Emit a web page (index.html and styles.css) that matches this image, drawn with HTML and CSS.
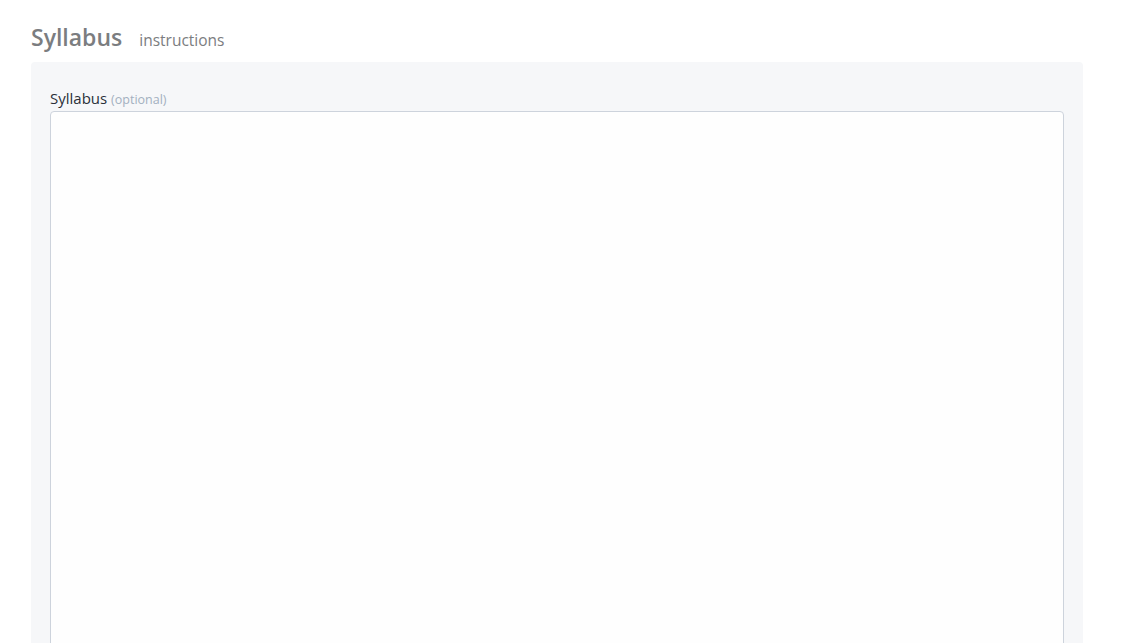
FILE: index.html
```html
<!DOCTYPE html>
<html>
	<head>
		<meta charset="UTF-8">
		<title>Syllabus</title>
		<link rel="stylesheet" href="styles.css">
	</head>
	<body>
		<div class="page">
			<div class="title">
				<h1>Syllabus</h1>
				<span class="sub">instructions</span>
			</div>
			<div class="panel">
				<label class="label" for="syllabus">Syllabus <span class="opt">(optional)</span></label>
				<textarea id="syllabus" class="area"></textarea>
			</div>
		</div>
	</body>
</html>
```

FILE: styles.css
```css
* {
	padding: 0;
	margin: 0;
	box-sizing: border-box;
}
body {
	font-family: "Open Sans", "Liberation Sans", sans-serif;
	background: #fff;
	overflow: hidden;
}
.page {
	width: 1052px;
	margin-left: 31px;
	padding-top: 20px;
}
.title {
	display: flex;
	align-items: baseline;
	gap: 17px;
	height: 42px;
}
.title h1 {
	font-size: 23px;
	font-weight: 600;
	color: #7b7d80;
	line-height: 34px;
}
.title .sub {
	font-size: 15.5px;
	color: #7b7d80;
}
.panel {
	background: #f6f7f9;
	border-radius: 4px;
	padding: 26px 19px 0;
	height: 620px;
}
.label {
	display: block;
	font-size: 15px;
	line-height: 21px;
	color: #2a303a;
	margin-bottom: 1px;
}
.label .opt {
	font-size: 12.5px;
	color: #a3b0c0;
}
.area {
	display: block;
	width: 100%;
	height: 600px;
	border: 1px solid #cdd3dc;
	border-radius: 4px;
	background: #fefefe;
	resize: none;
}
```
